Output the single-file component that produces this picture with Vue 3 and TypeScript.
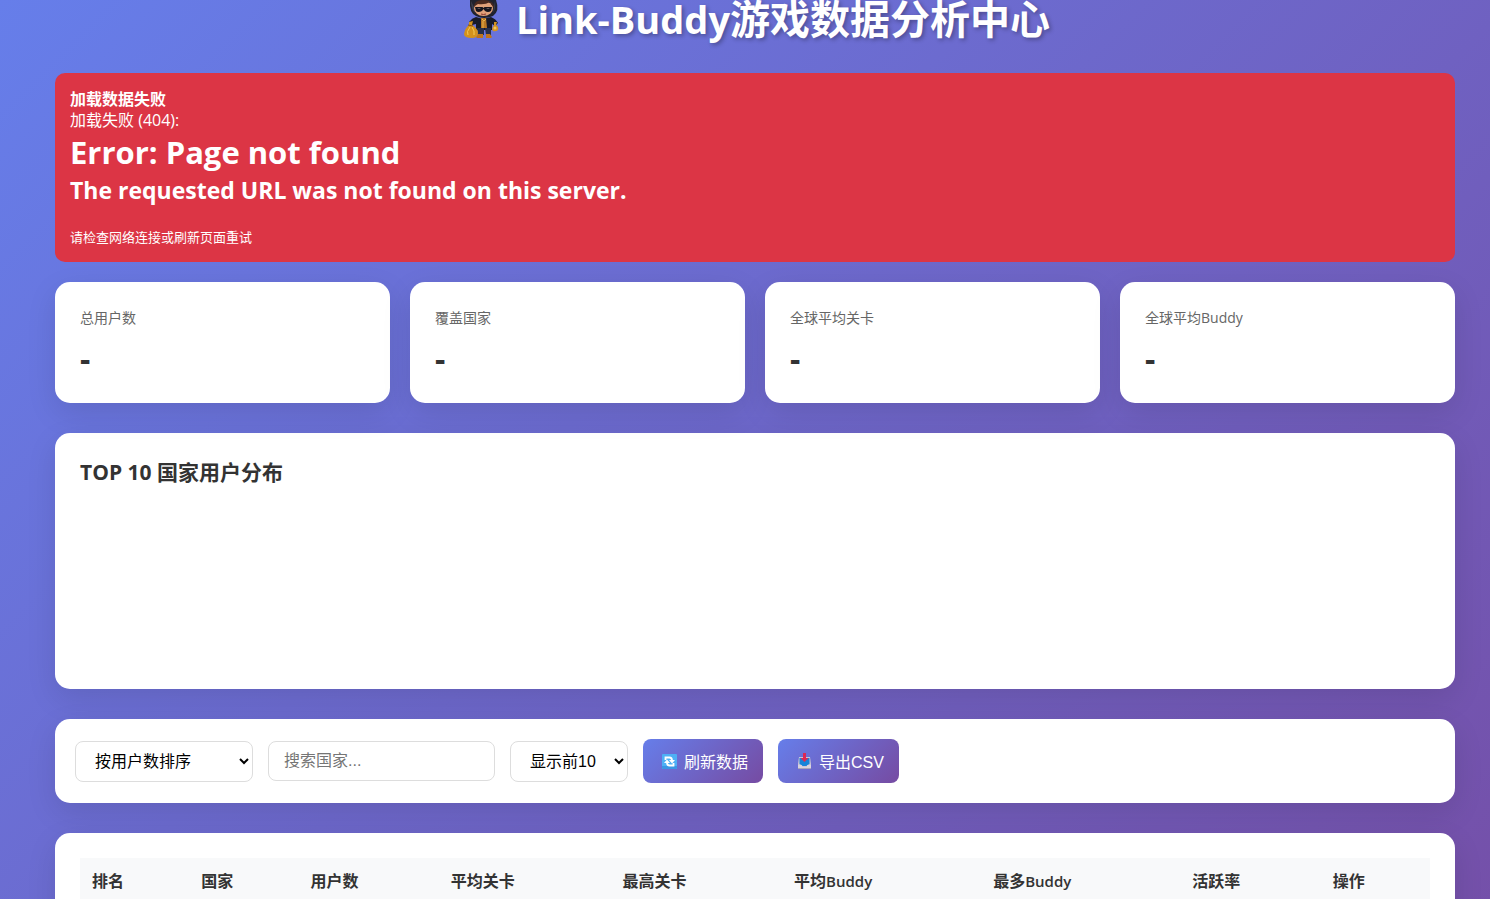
<script setup lang="ts">
import { ref } from 'vue'

interface Stat {
  label: string
  value: string
}

interface Column {
  name: string
  unit?: string
}

const stats: Stat[] = [
  { label: '总用户数', value: '-' },
  { label: '覆盖国家', value: '-' },
  { label: '全球平均关卡', value: '-' },
  { label: '全球平均Buddy', value: '-' },
]

const columns: Column[] = [
  { name: '排名' },
  { name: '国家' },
  { name: '用户数' },
  { name: '平均关卡' },
  { name: '最高关卡' },
  { name: '平均', unit: 'Buddy' },
  { name: '最多', unit: 'Buddy' },
  { name: '活跃率' },
  { name: '操作' },
]

const sortBy = ref('users')
const search = ref('')
const limit = ref('10')
</script>

<template>
  <main class="page">
    <h1 class="title">
      <svg class="mascot" viewBox="-4 0 40 40" aria-hidden="true">
        <path d="M6 0Q5 13 12 16Q20 20 29 16Q36 11 32 0Z" fill="#20222e" />
        <path d="M7 1Q7 9 11 13L10 7ZM31 1Q32 8 29 13L30 7Z" fill="#3b3c49" />
        <ellipse cx="19.500" cy="8.500" rx="9.500" ry="7.500" fill="#e0a079" />
        <path d="M10 7Q10 0 19 0Q30 0 30 8Q28 5 26 2Q21 5 14 4Q12 5 10 7Z" fill="#4b291e" />
        <path d="M11 7H18.500L19.500 8L20.500 7H28L27 11Q24 13 21 11L19.500 9L18 11Q14 13 12 11Z" fill="#17151c" />
        <path d="M13 8H17L15 9ZM22 8H26L24 9Z" fill="#75656b" />
        <path d="M17 14Q19.500 15 22 14" fill="none" stroke="#8f382e" stroke-width="1" />
        <path d="M12 17L19 19L27 17Q32 19 34 23L31 26L28 24V30H12V24L8 25L5 22Q8 18 12 17Z" fill="#181b29" />
        <path d="M17 18H22L23 28H17Z" fill="#b97824" />
        <path d="M18 19L20 21L22 19M19 21V28" fill="none" stroke="#e7b34d" />
        <path d="M13 28H20V35H14ZM21 28H27V35H22Z" fill="#25304d" />
        <path d="M14 34H19V38H13L12 37ZM22 34H26L28 37L27 38H22Z" fill="#bd741d" />
        <path d="M5 22L9 21L8 25Q13 28 14 32Q14 38 8 38Q0 38 0 34Q1 28 5 25Z" fill="#d4921c" />
        <path d="M6 27Q2 32 4 35M8 27Q11 31 10 35" fill="none" stroke="#f5ca56" />
        <path d="M4 25L9 26" stroke="#82500e" />
        <path d="M30 22L33 22L32 25Q35 27 34 30Q32 32 29 31Q27 29 30 25Z" fill="#d19322" />
        <circle cx="31" cy="28" r="1.500" fill="#f2c65a" />
      </svg>
      <span><span class="title-latin">Link-Buddy</span>游戏数据分析中心</span>
    </h1>

    <section class="alert" role="alert">
      <strong class="alert-line">加载数据失败</strong>
      <span class="alert-line">加载失败 (404):</span>
      <h1 class="alert-title">Error: Page not found</h1>
      <h2 class="alert-subtitle">The requested URL was not found on this server.</h2>
      <small class="alert-hint">请检查网络连接或刷新页面重试</small>
    </section>

    <section class="stats">
      <article v-for="stat in stats" :key="stat.label" class="card stat">
        <h3 class="stat-label">{{ stat.label }}</h3>
        <div class="stat-value">{{ stat.value }}</div>
      </article>
    </section>

    <section class="card chart">
      <h2 class="chart-title">TOP 10 国家用户分布</h2>
      <div class="chart-area"></div>
    </section>

    <section class="card controls">
      <select v-model="sortBy" class="field sort" aria-label="排序方式">
        <option value="users">按用户数排序</option>
      </select>
      <input v-model="search" class="field search" type="text" placeholder="搜索国家..." aria-label="搜索国家" />
      <select v-model="limit" class="field limit" aria-label="显示数量">
        <option value="10">显示前10</option>
      </select>
      <button type="button" class="action">
        <svg class="icon" viewBox="0 -2 22 18" aria-hidden="true">
          <rect x="4" y="0" width="15" height="15" rx="1" fill="#4eb0f5" />
          <path d="M4 12H19V14Q19 15 18 15H5Q4 15 4 14Z" fill="#3b96e4" />
          <path d="M7.500 6V3.500H11.500Q14 3.500 14 6.500M15.500 9V11.500H11.500Q9 11.500 9 8.500" fill="none" stroke="#fff" stroke-width="1.800" />
          <path d="M11 6H17L14 9.500ZM6 9L9 5.500L12 9Z" fill="#fff" />
        </svg>
        <span>刷新数据</span>
      </button>
      <button type="button" class="action">
        <svg class="icon" viewBox="0 -2 22 18" aria-hidden="true">
          <path d="M6 3H17L18 10V15H5V10Z" fill="#c9c5d6" />
          <path d="M6.500 4H16.500V10L14.500 11L13.500 12H9.500L8.500 11L6.500 10Z" fill="#1683d8" />
          <path d="M5 11H8.500L9.500 13H13.500L14.500 11H18V15H5Z" fill="#d8d3df" />
          <path d="M5 14H18V15H5Z" fill="#aaa4b8" />
          <path d="M10 -1H13V4H15.500L11.500 8L7.500 4H10Z" fill="#dc2855" />
        </svg>
        <span>导出CSV</span>
      </button>
    </section>

    <section class="card table-card">
      <table>
        <thead>
          <tr>
            <th v-for="column in columns" :key="column.name + (column.unit ?? '')" scope="col">
              {{ column.name }}<span v-if="column.unit" class="unit">{{ column.unit }}</span>
            </th>
          </tr>
        </thead>
      </table>
    </section>
  </main>
</template>

<style>
body {
  margin: 0;
}
</style>

<style scoped>
* {
  box-sizing: border-box;
}

.page {
  height: 100vh;
  overflow: hidden;
  padding: 0 35px 0 55px;
  background-image: linear-gradient(135deg, #667eea 0%, #764ba2 100%);
  background-size: 100% 130vh;
  color: #333;
  font-family: "Open Sans", "Noto Sans CJK SC", sans-serif;
  font-size: 16px;
  line-height: 21px;
}

h1,
h2,
h3 {
  margin: 0;
}

.title {
  display: flex;
  justify-content: center;
  gap: 16px;
  margin-bottom: 33px;
  color: #fff;
  font-size: 40px;
  line-height: 38px;
  white-space: nowrap;
  text-shadow: 2px 2px 4px rgba(0, 0, 0, 0.3);
}

.title-latin {
  font-size: 38px;
}

.mascot {
  flex: none;
  width: 40px;
  height: 40px;
}

.alert {
  margin-bottom: 20px;
  padding: 16px 15px 14px;
  border-radius: 10px;
  background: #dc3545;
  color: #fff;
}

.alert-line {
  display: block;
  font-size: 16px;
}

.alert-title {
  font-size: 31px;
  line-height: 43px;
}

.alert-subtitle {
  margin-bottom: 21px;
  font-size: 23px;
  line-height: 32px;
}

.alert-hint {
  display: block;
  font-size: 13px;
}

.stats {
  display: grid;
  grid-template-columns: repeat(4, 1fr);
  gap: 20px;
  margin-bottom: 30px;
}

.card {
  padding: 25px;
  border-radius: 15px;
  background: #fff;
  box-shadow: 0 10px 30px rgba(0, 0, 0, 0.1);
}

.stat-label {
  margin-bottom: 12px;
  color: #666;
  font-size: 14px;
  font-weight: 400;
}

.stat-value {
  font-size: 32px;
  font-weight: 700;
  line-height: 38px;
}

.chart {
  margin-bottom: 30px;
}

.chart-title {
  margin-bottom: 20px;
  font-size: 21px;
  line-height: 28px;
}

.chart-area {
  height: 158px;
}

.controls {
  display: flex;
  flex-wrap: wrap;
  align-items: center;
  gap: 15px;
  margin-bottom: 30px;
  padding: 20px;
}

.field {
  height: 41px;
  padding: 0 15px;
  border: 1px solid #ddd;
  border-radius: 8px;
  background: #fff;
  color: #000;
  font-family: "Liberation Sans", "Noto Sans CJK SC", sans-serif;
  font-size: 16px;
}

.sort {
  width: 178px;
}

.search {
  width: 227px;
  height: 40px;
}

.search::placeholder {
  color: #757575;
}

.limit {
  width: 118px;
}

.action {
  display: flex;
  align-items: center;
  gap: 4px;
  height: 44px;
  padding: 0 15px;
  border: 0;
  border-radius: 8px;
  background: linear-gradient(135deg, #667eea 0%, #764ba2 100%);
  color: #fff;
  font-family: "Liberation Sans", "Noto Sans CJK SC", sans-serif;
  font-size: 16px;
  cursor: pointer;
}

.icon {
  width: 22px;
  height: 18px;
}

table {
  width: 100%;
  border-collapse: collapse;
}

th {
  padding: 13px 12px 12px;
  background: #f8f9fa;
  font-weight: 600;
  text-align: left;
  white-space: nowrap;
}

.unit {
  font-size: 15px;
}
</style>
